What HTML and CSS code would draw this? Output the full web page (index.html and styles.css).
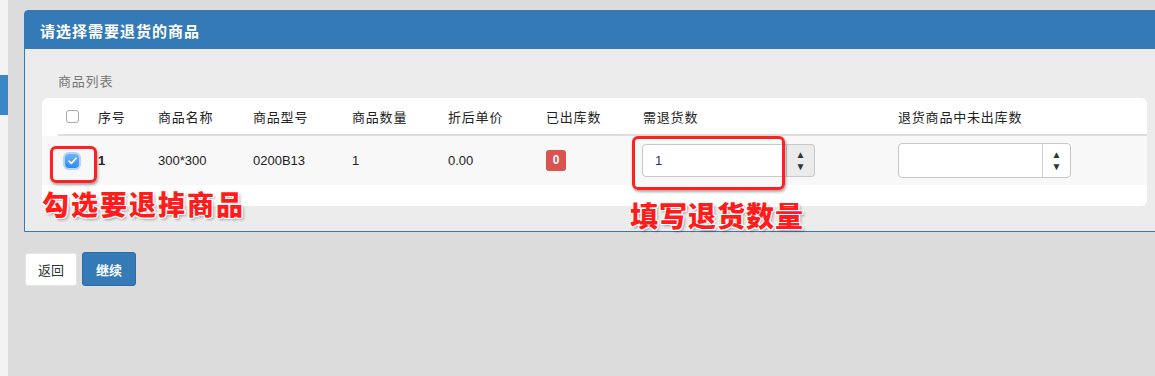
FILE: index.html
```html
<!DOCTYPE html>
<html lang="zh-CN">
  <head>
    <meta charset="UTF-8" />
    <title>退货 - 选择商品</title>
    <link rel="stylesheet" href="styles.css">
  </head>
  <body>
    <div class="page">
      <div class="sidebar"><div class="sidebar-mark"></div></div>

      <div class="main">
        <div class="panel">
          <div class="panel-heading">请选择需要退货的商品</div>
          <div class="panel-body">
            <div class="list-label">商品列表</div>

            <div class="goods-card">
              <div class="grid-row head-row">
                <div><span class="check-empty"></span></div>
                <div>序号</div>
                <div>商品名称</div>
                <div>商品型号</div>
                <div>商品数量</div>
                <div>折后单价</div>
                <div>已出库数</div>
                <div>需退货数</div>
                <div>退货商品中未出库数</div>
              </div>

              <div class="grid-row body-row">
                <div>
                  <span class="check-on">
                    <svg width="9" height="8" viewBox="0 0 9 8"><path d="M1 4.2 L3.4 6.4 L8 1.2" fill="none" stroke="#fff" stroke-width="1.6" stroke-linecap="round" stroke-linejoin="round"/></svg>
                  </span>
                </div>
                <div class="num-bold">1</div>
                <div>300*300</div>
                <div>0200B13</div>
                <div>1</div>
                <div>0.00</div>
                <div><span class="badge">0</span></div>
                <div>
                  <div class="spin-group">
                    <div class="spin-input">1</div>
                    <div class="spin-btn"><span>▲</span><span>▼</span></div>
                  </div>
                </div>
                <div>
                  <div class="spin-box">
                    <div class="spin-input"></div>
                    <div class="spin-btn"><span>▲</span><span>▼</span></div>
                  </div>
                </div>

                <!-- screenshot annotations -->
                <div class="mark mark-check"></div>
                <div class="note note-check">勾选要退掉商品</div>
                <div class="mark mark-qty"></div>
                <div class="note note-qty">填写退货数量</div>
              </div>
            </div>
          </div>
        </div>

        <div class="actions">
          <button class="btn btn-default">返回</button>
          <button class="btn btn-primary">继续</button>
        </div>
      </div>
    </div>
  </body>
</html>
```

FILE: styles.css
```css
body {
  margin: 0;
  height: 376px;
  overflow: hidden;
  background: #dcdcdc;
  font-family: "Liberation Sans", "Noto Sans CJK SC", sans-serif;
  font-size: 13px;
  color: #222;
}
.page {
  display: flex;
  min-height: 376px;
}
.sidebar {
  width: 8px;
  background: #f3f3f3;
}
.sidebar-mark {
  margin-top: 75px;
  height: 40px;
  background: #3a87c6;
}
.main {
  flex: 1;
  min-width: 0;
  padding: 10px 0 0 16px;
}
.panel {
  margin-right: -10px;
  border: 1px solid #337ab7;
  border-radius: 4px 4px 0 0;
  background: #ececec;
}
.panel-heading {
  height: 38px;
  display: flex;
  align-items: center;
  padding: 0 15px;
  background: #337ab7;
  color: #fff;
  font-size: 15px;
  font-weight: bold;
  letter-spacing: 1px;
}
.panel-body {
  padding: 24px 17px 25px;
}
.list-label {
  padding-left: 16px;
  line-height: 18px;
  margin-bottom: 7px;
  color: #777;
  letter-spacing: 0.8px;
}
.goods-card {
  background: #fff;
  border-radius: 6px;
  padding-bottom: 21px;
}
.grid-row {
  display: grid;
  align-items: center;
}
.head-row {
  margin-left: 16px;
  height: 36px;
  border-bottom: 2px solid #ddd;
  grid-template-columns: 40px 60px 95px 99px 96px 98px 97px 255px 1fr;
  letter-spacing: 0.8px;
}
.body-row {
  position: relative;
  height: 49px;
  background: #f8f8f8;
  grid-template-columns: 56px 60px 95px 99px 96px 98px 97px 255px 1fr;
}
.check-empty {
  display: block;
  margin-left: 8px;
  width: 11px;
  height: 11px;
  border: 1px solid #a9a9a9;
  border-radius: 3px;
  background: #fff;
}
.check-on {
  display: flex;
  align-items: center;
  justify-content: center;
  margin-left: 23px;
  width: 14px;
  height: 14px;
  border-radius: 4px;
  background: linear-gradient(#6db5fb, #2c8af0);
  box-shadow: 0 0 0 2px rgba(110, 175, 250, 0.5);
}
.num-bold {
  font-weight: bold;
}
.badge {
  display: inline-block;
  width: 20px;
  height: 21px;
  line-height: 21px;
  text-align: center;
  border-radius: 3px;
  background: #d9534f;
  color: #fff;
  font-size: 12px;
  font-weight: bold;
}
.spin-group {
  display: flex;
  height: 33px;
  margin-left: -1px;
}
.spin-group .spin-input {
  width: 131px;
  border: 1px solid #c8c8c8;
  border-radius: 4px 0 0 4px;
  background: #fff;
}
.spin-group .spin-btn {
  width: 27px;
  border: 1px solid #c8c8c8;
  border-left: none;
  border-radius: 0 4px 4px 0;
  background: #ebebeb;
}
.spin-input {
  display: flex;
  align-items: center;
  padding-left: 12px;
  color: #1f3470;
}
.spin-btn {
  display: flex;
  flex-direction: column;
  align-items: center;
  justify-content: center;
  gap: 3px;
  font-size: 10px;
  line-height: 9px;
  color: #333;
}
.spin-box {
  display: flex;
  width: 171px;
  height: 33px;
  border: 1px solid #c8c8c8;
  border-radius: 4px;
  background: #fff;
}
.spin-box .spin-input {
  flex: 1;
  border-right: 1px solid #d0d0d0;
}
.spin-box .spin-btn {
  width: 27px;
}
.mark {
  position: absolute;
  border: 3px solid #ff2020;
  border-radius: 6px;
  box-shadow: 1px 2px 3px rgba(0, 0, 0, 0.35);
}
.mark-check {
  left: 8px;
  top: 10px;
  width: 41px;
  height: 31px;
}
.mark-qty {
  left: 590px;
  top: 0;
  width: 147px;
  height: 48px;
}
.note {
  position: absolute;
  font-family: "Noto Sans CJK SC", sans-serif;
  font-size: 27px;
  font-weight: 900;
  line-height: 1;
  color: #ff1c1c;
  white-space: nowrap;
  letter-spacing: 2px;
  text-shadow: 1px 0 0 #fff, -1px 0 0 #fff, 0 1px 0 #fff, 0 -1px 0 #fff,
    1px 1px 0 #fff, -1px -1px 0 #fff, 1px -1px 0 #fff, -1px 1px 0 #fff,
    2px 2px 3px rgba(0, 0, 0, 0.35);
}
.note-check {
  left: 0;
  top: 54px;
}
.note-qty {
  left: 588px;
  top: 65px;
  font-size: 28px;
  letter-spacing: 1px;
}
.actions {
  display: flex;
  gap: 5px;
  margin-top: 20px;
}
.btn {
  height: 34px;
  padding: 0 12px;
  border-radius: 3px;
  font-family: "Liberation Sans", "Noto Sans CJK SC", sans-serif;
  font-size: 13px;
  cursor: pointer;
}
.btn-default {
  height: 33px;
  margin-top: 1px;
  margin-left: 1px;
  background: #fff;
  border: 1px solid #e6e6e6;
  color: #333;
}
.btn-primary {
  padding: 0 13px;
  background: #337ab7;
  border: 1px solid #2e6da4;
  color: #fff;
  font-weight: bold;
}
```
